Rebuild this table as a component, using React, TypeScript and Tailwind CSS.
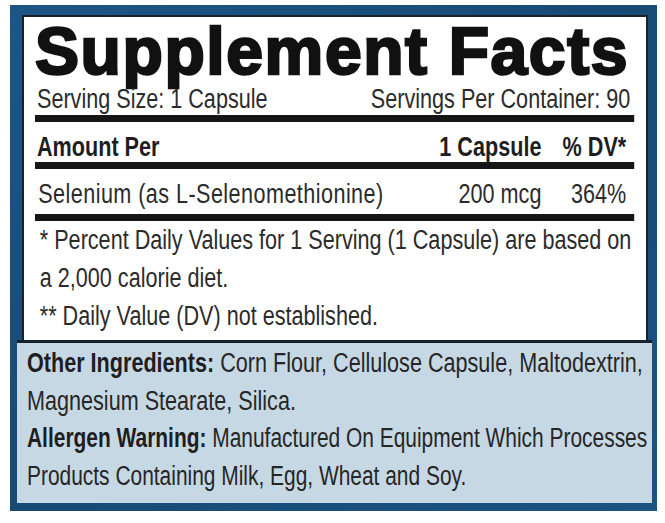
import React from "react";

// DIN-like condensed face: Liberation Sans squeezed horizontally (no narrow font installed)
const cond = "font-['Liberation_Sans',Arial,sans-serif] text-[27px] origin-left whitespace-nowrap";

function Bar() {
  return <div className="h-[7px] bg-[#161616]" />;
}

export default function App() {
  return (
    <div className="w-[665px] h-[523px] bg-white pt-[5px] pl-[10px]">
      <div className="w-[647px] h-[506px] flex flex-col overflow-hidden bg-gradient-to-br from-[#1d5684] via-[#174a75] to-[#1b5482] pt-[10px]">
        <div className="ml-[12px] mr-[9px] h-[325px] shrink-0 overflow-hidden bg-white border-2 border-b-0 border-[#18222e] pl-[11px]">
          <h1 className="pt-[1px] whitespace-nowrap text-[66px] leading-none font-bold tracking-[1.6px] text-[#111] font-['Liberation_Sans',Arial,sans-serif] [-webkit-text-stroke:2.5px_#111]">
            Supplement Facts
          </h1>
          <div className={`${cond} scale-x-[0.8] w-[749px] text-[#2b2b2b]`}>
            <div className="h-[30px] leading-[30px] flex justify-between pl-[2.5px] pr-[5px]">
              <span>Serving Size: 1 Capsule</span>
              <span>Servings Per Container: 90</span>
            </div>
            <div className="mt-[1px]">
              <Bar />
            </div>
            <div className="mt-[10px] h-[30px] leading-[30px] flex pl-[2.5px] pr-[10px] font-bold text-[#1e1e1e]">
              <span className="flex-1">Amount Per</span>
              <span className="text-right">1 Capsule</span>
              <span className="w-[106px] text-right">% DV*</span>
            </div>
            <Bar />
            <div className="mt-[10px] h-[30px] leading-[30px] flex pl-[4px] pr-[10px]">
              <span className="flex-1 tracking-[0.55px]">Selenium (as L-Selenomethionine)</span>
              <span className="text-right">200 mcg</span>
              <span className="w-[106px] text-right">364%</span>
            </div>
            <div className="mt-[5px]">
              <Bar />
            </div>
            <div className="pl-[6px] leading-[38px]">
              <p>* Percent Daily Values for 1 Serving (1 Capsule) are based on</p>
              <p>a 2,000 calorie diet.</p>
              <p>** Daily Value (DV) not established.</p>
            </div>
          </div>
        </div>
        <div className="ml-[7px] mr-[5px] h-[163px] shrink-0 overflow-hidden bg-[#c7d8e5] border-t-[3px] border-[#18222e] pl-[10px] pt-[2px] text-[#262626]">
          <p className={`${cond} scale-x-[0.8] w-[781px] leading-[37.5px]`}>
            <span className="font-bold text-[#1e1e1e]">Other Ingredients:</span> Corn Flour, Cellulose Capsule, Maltodextrin,
            <br />
            Magnesium Stearate, Silica.
          </p>
          <p className={`${cond} scale-x-[0.775] w-[806px] leading-[37.5px]`}>
            <span className="font-bold text-[#1e1e1e]">Allergen Warning:</span> Manufactured On Equipment Which Processes
            <br />
            Products Containing Milk, Egg, Wheat and Soy.
          </p>
        </div>
      </div>
    </div>
  );
}
